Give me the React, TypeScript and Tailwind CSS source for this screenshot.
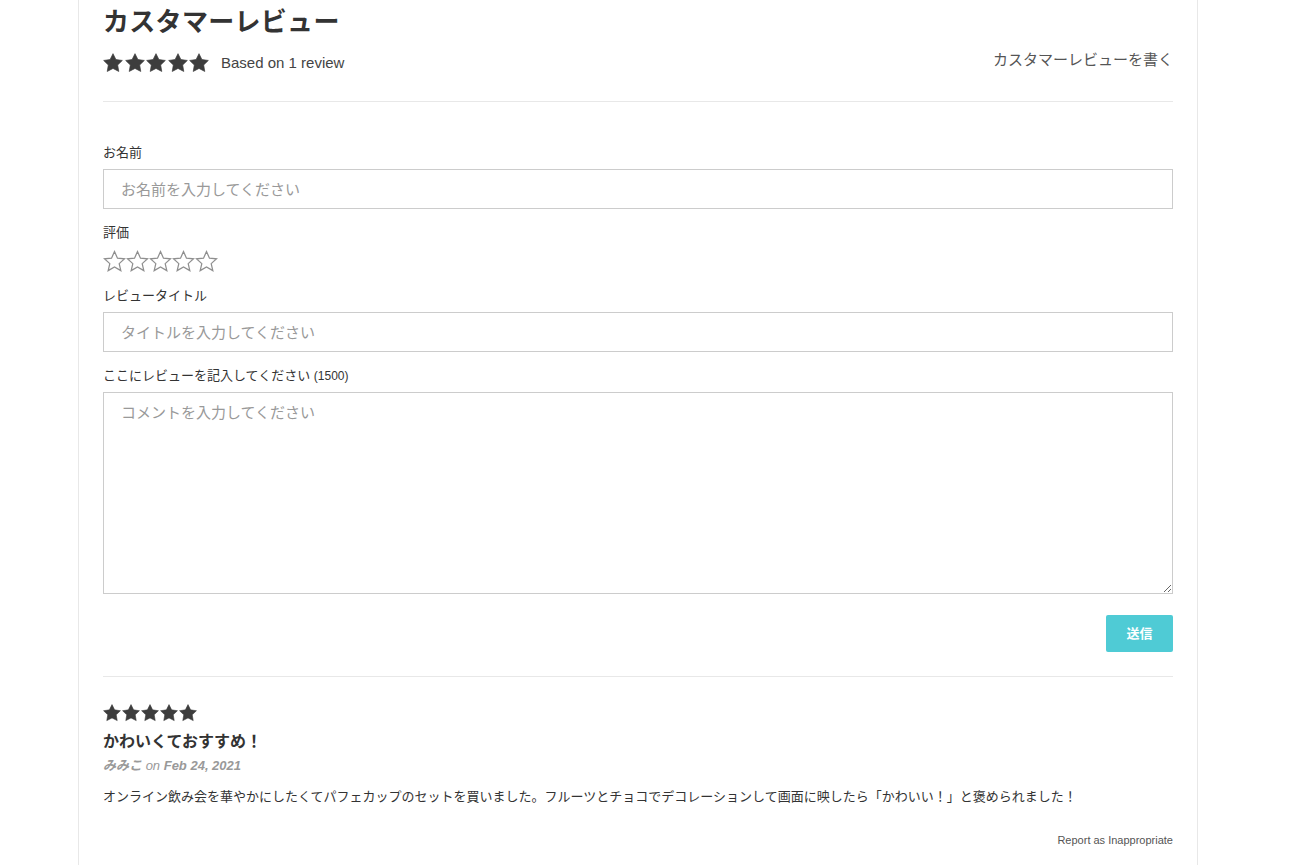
import React from 'react'

const FONT = { fontFamily: '"Liberation Sans", "Noto Sans CJK JP", sans-serif' }

// fat star for ratings
const SOLID_STAR =
  'M12 0.8L15.47 7.83L23.22 8.95L17.61 14.42L18.94 22.15L12 18.5L5.06 22.15L6.39 14.42L0.78 8.95L8.53 7.83Z'

// thin star for the empty rating picker
const OUTLINE_STAR =
  'M12 1.6l3.1 6.9 7.4.7-5.6 5 1.7 7.3L12 17.6l-6.6 3.9 1.7-7.3-5.6-5 7.4-.7z'

function SolidStar({ size }: { size: number }) {
  return (
    <svg width={size} height={size} viewBox="0 0 24 24" className="block">
      <path d={SOLID_STAR} fill="#3d3d3d" strokeLinejoin="round" stroke="#3d3d3d" strokeWidth="0.8" />
    </svg>
  )
}

function EmptyStar() {
  return (
    <svg width={23} height={23} viewBox="0 0 24 24" className="block">
      <path d={OUTLINE_STAR} fill="none" stroke="#8f8f8f" strokeWidth="1.3" />
    </svg>
  )
}

function Label({ children }: { children: React.ReactNode }) {
  return <div className="text-[13px] leading-[18px] text-[#333]">{children}</div>
}

export default function App() {
  return (
    <div className="min-h-[865px] bg-white" style={FONT}>
      <div className="ml-[78px] w-[1120px] min-h-[865px] border-x border-[#e8e8e8] px-6">
        {/* header */}
        <div className="pt-1 pb-[26px] border-b border-[#e8e8e8]">
          <h2 className="text-[26px] leading-[36px] font-bold text-[#333] tracking-[0.3px]">
            カスタマーレビュー
          </h2>
          <div className="mt-[11px] h-6 flex items-center justify-between">
            <div className="flex items-center">
              <div className="flex gap-[1.5px]">
                {[0, 1, 2, 3, 4].map((i) => (
                  <SolidStar key={i} size={20} />
                ))}
              </div>
              <span className="ml-3 text-[15px] text-[#444]">Based on 1 review</span>
            </div>
            <span className="-mt-[5px] text-[15px] text-[#555]">カスタマーレビューを書く</span>
          </div>
        </div>

        {/* form */}
        <div className="pt-[42px] pb-6 border-b border-[#e8e8e8]">
          <Label>お名前</Label>
          <input
            className="mt-[7px] block w-full h-10 border border-[#cccccc] px-[17px] text-[15px] text-[#333] placeholder:text-[#999] outline-none"
            placeholder="お名前を入力してください"
            style={FONT}
          />
          <div className="mt-[15px]">
            <Label>評価</Label>
          </div>
          <div className="mt-2 flex">
            {[0, 1, 2, 3, 4].map((i) => (
              <EmptyStar key={i} />
            ))}
          </div>
          <div className="mt-[14px]">
            <Label>レビュータイトル</Label>
          </div>
          <input
            className="mt-[7px] block w-full h-10 border border-[#cccccc] px-[17px] text-[15px] text-[#333] placeholder:text-[#999] outline-none"
            placeholder="タイトルを入力してください"
            style={FONT}
          />
          <div className="mt-[15px]">
            <Label>
              ここにレビューを記入してください <span className="text-[12px]">(1500)</span>
            </Label>
          </div>
          <textarea
            className="mt-[7px] block w-full h-[202px] border border-[#cccccc] px-[17px] pt-[9px] text-[15px] leading-[22px] text-[#333] placeholder:text-[#999] outline-none"
            placeholder="コメントを入力してください"
            style={FONT}
          />
          <div className="mt-[21px] flex justify-end">
            <button className="w-[67px] h-[37px] rounded-[2px] bg-[#4fcbd5] text-white text-[13px] font-bold">
              送信
            </button>
          </div>
        </div>

        {/* review */}
        <div className="pt-[27px]">
          <div className="flex gap-[1px]">
            {[0, 1, 2, 3, 4].map((i) => (
              <SolidStar key={i} size={18} />
            ))}
          </div>
          <h3 className="mt-[9px] text-[16px] leading-[22px] font-bold text-[#333]">
            かわいくておすすめ！
          </h3>
          <div className="mt-1 text-[13px] leading-[18px] italic text-[#999]">
            <span className="font-bold">みみこ</span> on <span className="font-bold">Feb 24, 2021</span>
          </div>
          <p className="mt-3 text-[13px] leading-[20px] text-[#333]">
            オンライン飲み会を華やかにしたくてパフェカップのセットを買いました。フルーツとチョコでデコレーションして画面に映したら「かわいい！」と褒められました！
          </p>
          <div className="mt-[25px] flex justify-end">
            <span className="text-[11px] leading-[16px] text-[#555]">Report as Inappropriate</span>
          </div>
        </div>
      </div>
    </div>
  )
}
